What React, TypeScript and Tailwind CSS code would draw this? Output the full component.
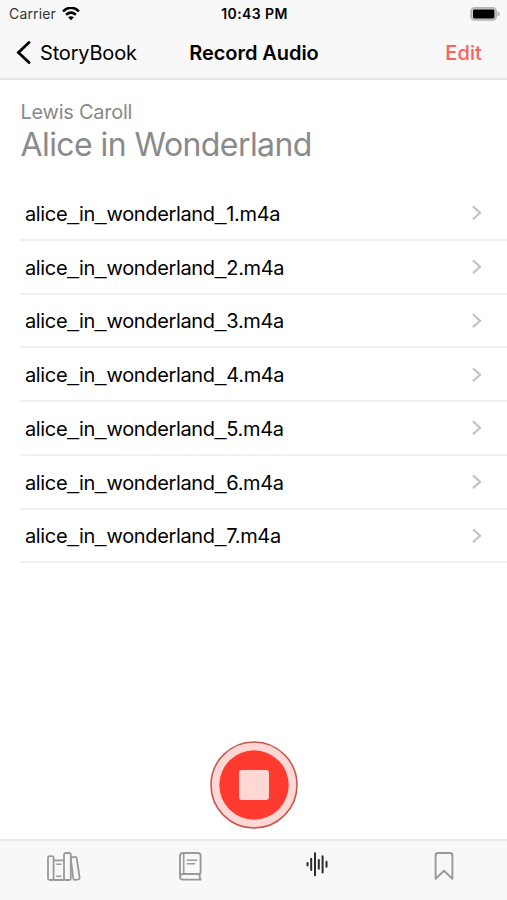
import { Fragment } from 'react';
import type { ReactNode } from 'react';

const recordings = [1, 2, 3, 4, 5, 6, 7].map(n => `alice_in_wonderland_${n}.m4a`);

const StatusBar = () => (
  <div className="grid grid-cols-3 items-center h-[27px] pl-[9px] pr-[7px] text-[14px] leading-[27px]">
    <div className="flex items-center gap-[6px]">
      <span className="tracking-[0.15px] text-[#333]">Carrier</span>
      <WifiIcon />
    </div>
    <span className="text-center font-semibold whitespace-nowrap tracking-[0.4px]">10:43 PM</span>
    <div className="flex justify-end">
      <BatteryIcon />
    </div>
  </div>
);

const NavBar = () => (
  <div className="grid grid-cols-3 items-center h-[51px] pl-[16px] pr-[25px] pt-px text-[20px] leading-[50px]">
    <button className="flex items-center gap-[9px]">
      <BackIcon />
      <span className="tracking-[-0.18px]">StoryBook</span>
    </button>
    <h1 className="justify-self-center pl-[10px] font-semibold whitespace-nowrap tracking-[-0.06px]">Record Audio</h1>
    <button className="justify-self-end font-medium text-[#fd6158] tracking-[0.1px]">Edit</button>
  </div>
);

export default function App() {
  return (
    <div className="w-[507px] h-[900px] flex flex-col bg-white text-black overflow-hidden font-['Inter',sans-serif]">
      <header className="h-[80px] shrink-0 bg-[#f8f8f8] border-b-2 border-[#e6e6e6]">
        <StatusBar />
        <NavBar />
      </header>

      <main className="flex-1 flex flex-col">
        {/* Book title */}
        <div className="pl-[20.5px] pt-[20px] h-[107px] text-[#8a8a8a]">
          <p className="text-[20px] leading-[24px] tracking-[-0.25px]">Lewis Caroll</p>
          <h2 className="text-[32px] leading-[42px] tracking-[-0.57px]">Alice in Wonderland</h2>
        </div>

        {/* Recordings */}
        <ul className="pl-[20px]">
          {recordings.map(name => (
            <li key={name} className="flex items-center justify-between h-[53.75px] pl-[5px] pr-[25px] pt-px border-b-2 border-[#f1f1f1]">
              <FileName name={name} />
              <ChevronIcon />
            </li>
          ))}
        </ul>

        <div className="mt-auto flex justify-center pb-[9px]">
          <StopButton />
        </div>
      </main>

      <nav className="h-[61px] shrink-0 grid grid-cols-4 bg-[#f8f8f8] border-t-2 border-[#e9e9e9] text-[#999]">
        <Tab><BooksIcon /></Tab>
        <Tab><BookIcon /></Tab>
        <Tab><WaveformIcon /></Tab>
        <Tab><BookmarkIcon /></Tab>
      </nav>
    </div>
  );
}

// Underscores use a wider glyph than Inter's
const FileName = ({ name }: { name: string }) => (
  <span className="pt-px text-[20px] leading-[24px] tracking-[-0.36px]">
    {name.split('_').map((part, i) => (
      <Fragment key={i}>
        {i > 0 && <span className="font-['Liberation_Sans',sans-serif] text-[21px] leading-none tracking-normal align-[1px]">_</span>}
        {part}
      </Fragment>
    ))}
  </span>
);

const Tab = ({ children }: { children: ReactNode }) => (
  <button className="flex justify-center items-start pt-[10px]">{children}</button>
);

const StopButton = () => (
  <button aria-label="Stop">
    <svg width="90" height="90" viewBox="0 0 90 90">
      <circle cx="45" cy="45" r="43" fill="#ffd8d5" stroke="#c95750" strokeWidth="1.6" />
      <circle cx="45" cy="45" r="34.7" fill="#ff3b30" />
      <rect x="30" y="30" width="30" height="30" rx="3" fill="#ffd8d5" />
    </svg>
  </button>
);

const WifiIcon = () => (
  <svg width="18" height="14" viewBox="0 0 18 14" fill="none" stroke="#000" strokeWidth="2.6">
    <path d="M1 4.4Q9-2.9 17 4.4" />
    <path d="M4.1 7.8Q9 3.6 13.9 7.8" />
    <path d="M9 13.3L6.1 10.3Q9 8 11.9 10.3Z" fill="#000" stroke="none" />
  </svg>
);

const BatteryIcon = () => (
  <svg width="30" height="14" viewBox="0 0 30 14">
    <rect x="1" y="0.8" width="25.2" height="12.2" rx="3.6" fill="#ccc" stroke="#b3b3b3" strokeWidth="1.6" />
    <rect x="3" y="2.4" width="21.4" height="9" rx="1.4" fill="#000" />
    <path d="M27.4 4.2Q30 5.2 30 6.9T27.4 9.6Z" fill="#b3b3b3" />
  </svg>
);

const BackIcon = () => (
  <svg width="15" height="24" viewBox="0 0 15 24" fill="none" stroke="#000" strokeWidth="2.8" strokeLinecap="round">
    <path d="M13 1.5L2.4 11.5 13 21.5" />
  </svg>
);

const ChevronIcon = () => (
  <svg width="11" height="16" viewBox="0 0 11 16" fill="none" stroke="#c2c2c4" strokeWidth="2.2">
    <path d="M2 1.3L9 7.8 2 14.3" />
  </svg>
);

const BooksIcon = () => (
  <svg width="35" height="31" viewBox="0 0 35 31" fill="none" stroke="currentColor" strokeWidth="1.8" strokeLinejoin="round">
    <rect x="2" y="5.2" width="5.6" height="23.8" rx="1.8" />
    <path d="M7.6 9.4H18M7.6 29H18" />
    <path d="M10.2 13.2H15.4M10.2 25.2H15.4" strokeWidth="1.4" />
    <rect x="18" y="2" width="6.8" height="27" rx="1.8" />
    <path d="M24.8 7.8Q24.8 6.5 26 6.3L29 5.9Q30.4 5.8 30.7 7.2L33.6 26.4Q33.8 28 32.3 28.3L29 28.8Q27.6 29 27.3 27.5Z" />
  </svg>
);

const BookIcon = () => (
  <svg width="25" height="31" viewBox="0 0 25 31" fill="none" stroke="currentColor" strokeWidth="1.9" strokeLinecap="round" strokeLinejoin="round">
    <path d="M2 25.8V4.8Q2 2 4.8 2H20Q22.6 2 22.6 4.6V21Q22.6 23 20.6 23H4.8Q2 23 2 25.6 2 28.6 4.8 28.6H22.8Q20.8 25.8 22 22.6" />
    <path d="M5.7 2.2V22.8M9.4 9.2H18.6M9.4 12.8H16.6" strokeWidth="1.6" />
  </svg>
);

const WaveformIcon = () => (
  <svg width="24" height="30" viewBox="0 0 24 30" fill="none" stroke="#2b2b2b" strokeWidth="2" strokeLinecap="round">
    <path d="M2.5 11.9V14.5M6.2 7.7V19M10 2.2V24.2M13.8 9V17.8M17.6 5.2V21.4M21.5 10.7V15.7" />
  </svg>
);

const BookmarkIcon = () => (
  <svg width="20" height="30" viewBox="0 0 20 30" fill="none" stroke="currentColor" strokeWidth="1.9" strokeLinejoin="round">
    <path d="M1.6 27.8V4.5Q1.6 2 4.1 2H15.9Q18.4 2 18.4 4.5V27.8L10 19.8Z" />
  </svg>
);
